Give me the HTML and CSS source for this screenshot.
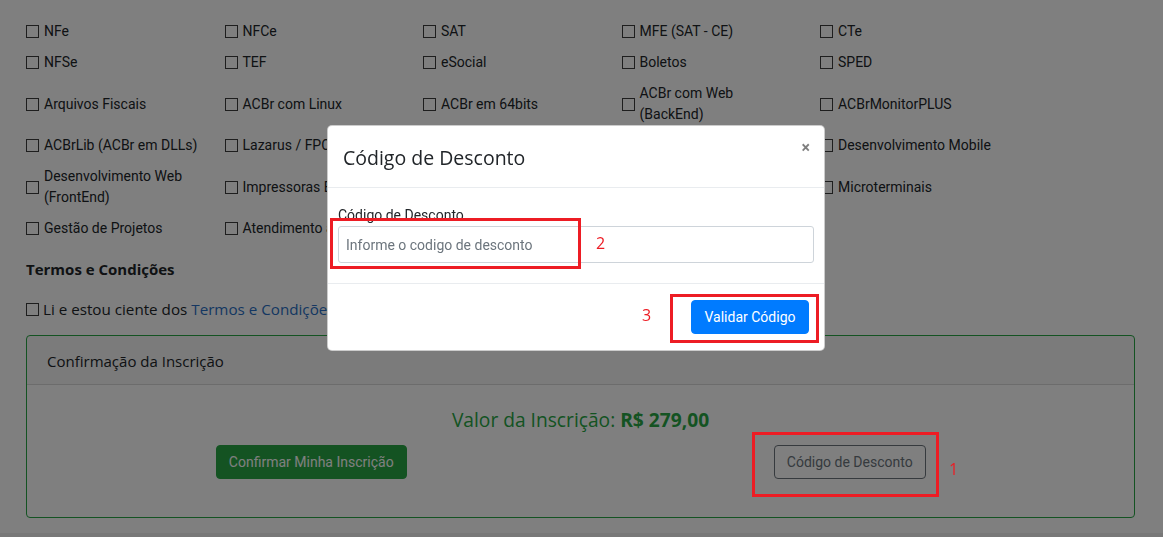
FILE: index.html
```html
<!DOCTYPE html>
<html lang="pt-BR">
<head>
<meta charset="utf-8">
<title>Inscrição</title>
<link rel="stylesheet" href="styles.css">
</head>
<body>
<div class="page">
  <div class="options">
    <label class="opt"><span class="cb"></span><span class="txt">NFe</span></label>
    <label class="opt"><span class="cb"></span><span class="txt">NFCe</span></label>
    <label class="opt"><span class="cb"></span><span class="txt">SAT</span></label>
    <label class="opt"><span class="cb"></span><span class="txt">MFE (SAT - CE)</span></label>
    <label class="opt"><span class="cb"></span><span class="txt">CTe</span></label>

    <label class="opt"><span class="cb"></span><span class="txt">NFSe</span></label>
    <label class="opt"><span class="cb"></span><span class="txt">TEF</span></label>
    <label class="opt"><span class="cb"></span><span class="txt">eSocial</span></label>
    <label class="opt"><span class="cb"></span><span class="txt">Boletos</span></label>
    <label class="opt"><span class="cb"></span><span class="txt">SPED</span></label>

    <label class="opt"><span class="cb"></span><span class="txt">Arquivos Fiscais</span></label>
    <label class="opt"><span class="cb"></span><span class="txt">ACBr com Linux</span></label>
    <label class="opt"><span class="cb"></span><span class="txt">ACBr em 64bits</span></label>
    <label class="opt"><span class="cb"></span><span class="txt">ACBr com Web (BackEnd)</span></label>
    <label class="opt"><span class="cb"></span><span class="txt">ACBrMonitorPLUS</span></label>

    <label class="opt"><span class="cb"></span><span class="txt">ACBrLib (ACBr em DLLs)</span></label>
    <label class="opt"><span class="cb"></span><span class="txt">Lazarus / FPC</span></label>
    <label class="opt"><span class="cb"></span></label>
    <label class="opt"><span class="cb"></span></label>
    <label class="opt"><span class="cb"></span><span class="txt">Desenvolvimento Mobile</span></label>

    <label class="opt"><span class="cb"></span><span class="txt">Desenvolvimento Web (FrontEnd)</span></label>
    <label class="opt"><span class="cb"></span><span class="txt">Impressoras ESC/POS</span></label>
    <label class="opt"><span class="cb"></span></label>
    <label class="opt"><span class="cb"></span></label>
    <label class="opt"><span class="cb"></span><span class="txt">Microterminais</span></label>

    <label class="opt"><span class="cb"></span><span class="txt">Gestão de Projetos</span></label>
    <label class="opt"><span class="cb"></span><span class="txt">Atendimento ao Cliente</span></label>
  </div>

  <h5 class="terms-title">Termos e Condições</h5>
  <label class="terms"><span class="cb"></span><span>Li e estou ciente dos</span><a href="#" class="link">Termos e Condições do Evento</a></label>

  <div class="card">
    <div class="card-header">Confirmação da Inscrição</div>
    <div class="card-body">
      <div class="price">Valor da Inscrição: <strong>R$ 279,00</strong></div>
      <div class="actions">
        <div class="half"><button class="btn btn-success">Confirmar Minha Inscrição</button></div>
        <div class="half"><button class="btn btn-outline">Código de Desconto</button></div>
      </div>
    </div>
  </div>
</div>
<div class="footer-band"></div>

<div class="backdrop"></div>

<div class="modal">
  <div class="modal-header">
    <h5 class="modal-title">Código de Desconto</h5>
    <span class="close">×</span>
  </div>
  <div class="modal-body">
    <div class="field-label">Código de Desconto</div>
    <input class="input" type="text" placeholder="Informe o codigo de desconto">
  </div>
  <div class="modal-footer">
    <button class="btn btn-primary">Validar Código</button>
  </div>
</div>

<div class="mark mark-1"></div>
<span class="num num-1">1</span>
<div class="mark mark-2"></div>
<span class="num num-2">2</span>
<div class="mark mark-3"></div>
<span class="num num-3">3</span>
</body>
</html>
```

FILE: styles.css
```css
* { box-sizing: border-box; }
html, body { margin: 0; padding: 0; }
body {
  background: #ffffff;
  color: #212529;
  font-family: "Segoe UI", "Open Sans", "Noto Sans", sans-serif;
  font-size: 15px;
  height: 537px;
  overflow: hidden;
}
.page {
  padding: 21px 28px 0 26px;
}
.options {
  display: grid;
  grid-template-columns: repeat(5, 198.5px);
  grid-template-rows: 21px 21px 42px 21px 42px 21px;
  row-gap: 10px;
  align-items: center;
  font-family: Roboto, "Liberation Sans", sans-serif;
  font-size: 14px;
  line-height: 21px;
}
.opt {
  display: flex;
  align-items: center;
  gap: 5px;
}
.opt .txt { max-width: 156px; }
.cb {
  flex: none;
  display: inline-block;
  width: 13px;
  height: 13px;
  border: 1px solid #3c3c3c;
  background: #fff;
}
.terms-title {
  margin: 18px 0 0;
  font-size: 15px;
  font-weight: 700;
  line-height: 24px;
}
.terms {
  display: flex;
  align-items: center;
  gap: 4px;
  margin-top: 16px;
  line-height: 24px;
  font-size: 15.2px;
}
.link { color: #2a6fc4; text-decoration: none; white-space: nowrap; }
.card {
  margin-top: 14px;
  border: 1px solid #28a745;
  border-radius: 4px;
  height: 183px;
}
.card-header {
  padding: 13px 20px 11px;
  line-height: 24px;
  background: rgba(0,0,0,.03);
  border-bottom: 1px solid rgba(0,0,0,.125);
}
.card-body {
  padding: 20px 15px;
}
.price {
  text-align: center;
  color: #28a745;
  font-size: 19.2px;
  line-height: 30px;
}
.price strong { font-weight: 700; }
.actions {
  display: flex;
  margin-top: 10px;
}
.half {
  flex: 1;
  display: flex;
  justify-content: center;
}
.btn {
  font-family: Roboto, "Liberation Sans", sans-serif;
  font-size: 14px;
  line-height: 20px;
  padding: 6px 12px;
  border-radius: 4px;
  border: 1px solid transparent;
  height: 34px;
  white-space: nowrap;
}
.btn-success { background: #28a745; color: #fff; border-color: #28a745; min-width: 190px; }
.btn-outline { background: transparent; color: #6c757d; border-color: #6c757d; width: 152px; }
.btn-primary { background: #007bff; color: #fff; border-color: #007bff; width: 118px; }
.footer-band {
  position: absolute;
  left: 0; right: 0; top: 533px; height: 4px;
  background: #f0f0f0;
}
.backdrop {
  position: fixed;
  inset: 0;
  background: rgba(0,0,0,.5);
}
.modal {
  position: fixed;
  left: 327px;
  top: 125px;
  width: 498px;
  background: #fff;
  border: 1px solid rgba(0,0,0,.2);
  border-radius: 5px;
}
.modal-header {
  display: flex;
  justify-content: space-between;
  align-items: flex-start;
  padding: 17px 15px 13px 15px;
  border-bottom: 1px solid #e9ecef;
  height: 62px;
}
.modal-title {
  margin: 0;
  font-size: 19.5px;
  font-weight: 400;
  line-height: 30px;
}
.close {
  font-family: Roboto, "Liberation Sans", sans-serif;
  font-size: 16px;
  font-weight: 700;
  line-height: 16px;
  color: #000;
  opacity: .5;
  margin-top: -3px;
  margin-right: -1px;
}
.modal-body {
  padding: 17px 10px 20px 10px;
  font-family: Roboto, "Liberation Sans", sans-serif;
  height: 95px;
}
.field-label {
  font-size: 14px;
  line-height: 21px;
}
.input {
  display: block;
  width: 100%;
  height: 37px;
  border: 1px solid #ced4da;
  border-radius: 3px;
  padding: 6px 7px;
  font-family: Roboto, "Liberation Sans", sans-serif;
  font-size: 14px;
  color: #495057;
}
.input::placeholder { color: #6c757d; }
.modal-footer {
  display: flex;
  justify-content: flex-end;
  padding: 16px 15px 16px;
  border-top: 1px solid #e9ecef;
}
.mark {
  position: absolute;
  border: 3px solid #ed1c24;
}
.mark-1 { left: 752px; top: 432px; width: 187px; height: 65px; }
.mark-2 { left: 330px; top: 218px; width: 251px; height: 51px; }
.mark-3 { left: 670px; top: 294px; width: 149px; height: 49px; }
.num {
  position: absolute;
  color: #ed1c24;
  font-family: "Segoe UI", "Open Sans", sans-serif;
  font-size: 16px;
  line-height: 20px;
}
.num-1 { left: 949px; top: 459px; }
.num-2 { left: 596px; top: 233px; }
.num-3 { left: 642px; top: 305px; }
```
